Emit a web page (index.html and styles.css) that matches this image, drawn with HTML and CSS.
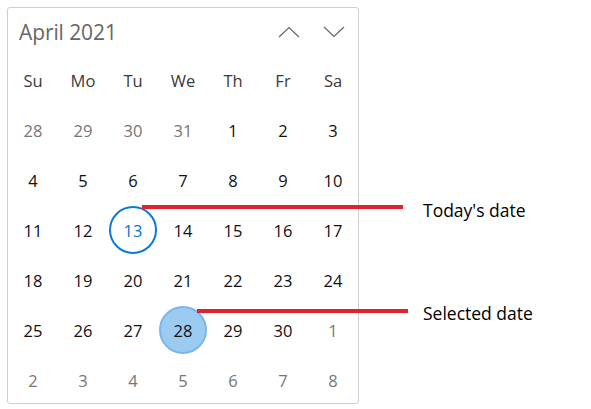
FILE: index.html
```html
<!DOCTYPE html>
<html lang="en">
<head>
<meta charset="utf-8">
<title>Calendar</title>
<link rel="stylesheet" href="styles.css">
</head>
<body>
<div class="page">
  <div class="calendar">
    <div class="cal-header">
      <span class="month">April 2021</span>
      <div class="nav">
        <button class="nav-btn" aria-label="Previous">
          <svg width="22" height="12" viewBox="0 0 22 12"><path d="M1 11 L11 1.5 L21 11" fill="none" stroke="#666" stroke-width="1.2"/></svg>
        </button>
        <button class="nav-btn" aria-label="Next">
          <svg width="22" height="12" viewBox="0 0 22 12"><path d="M1 1 L11 10.5 L21 1" fill="none" stroke="#666" stroke-width="1.2"/></svg>
        </button>
      </div>
    </div>
    <div class="grid">
      <div class="dow">Su</div><div class="dow">Mo</div><div class="dow">Tu</div><div class="dow">We</div><div class="dow">Th</div><div class="dow">Fr</div><div class="dow">Sa</div>

      <div class="day other">28</div><div class="day other">29</div><div class="day other">30</div><div class="day other">31</div><div class="day">1</div><div class="day">2</div><div class="day">3</div>
      <div class="day">4</div><div class="day">5</div><div class="day">6</div><div class="day">7</div><div class="day">8</div><div class="day">9</div><div class="day">10</div>
      <div class="day">11</div><div class="day">12</div><div class="day"><span class="today">13</span></div><div class="day">14</div><div class="day">15</div><div class="day">16</div><div class="day">17</div>
      <div class="day">18</div><div class="day">19</div><div class="day">20</div><div class="day">21</div><div class="day">22</div><div class="day">23</div><div class="day">24</div>
      <div class="day">25</div><div class="day">26</div><div class="day">27</div><div class="day"><span class="selected">28</span></div><div class="day">29</div><div class="day">30</div><div class="day other">1</div>
      <div class="day other">2</div><div class="day other">3</div><div class="day other">4</div><div class="day other">5</div><div class="day other">6</div><div class="day other">7</div><div class="day other">8</div>
    </div>
  </div>

  <div class="callout callout-today"></div>
  <span class="label label-today">Today's date</span>
  <div class="callout callout-selected"></div>
  <span class="label label-selected">Selected date</span>
</div>
</body>
</html>
```

FILE: styles.css
```css
* { box-sizing: border-box; }
html, body { margin: 0; padding: 0; background: #fff; }
body {
  font-family: "Open Sans", "Noto Sans", "Liberation Sans", sans-serif;
  width: 591px;
  height: 409px;
  overflow: hidden;
}
.page {
  position: relative;
  padding: 7px;
  width: 591px;
  height: 409px;
}
.calendar {
  width: 352px;
  height: 397px;
  border: 1px solid #cfcfcf;
  border-radius: 3px;
  overflow: hidden;
  background: #fff;
}
.cal-header {
  height: 47px;
  display: flex;
  align-items: center;
  justify-content: space-between;
  padding: 0 13px 0 11px;
}
.month {
  font-size: 21px;
  color: #666;
  letter-spacing: -0.1px;
}
.nav {
  display: flex;
  gap: 23px;
  align-items: center;
}
.nav-btn {
  border: 0;
  background: none;
  padding: 0;
  width: 22px;
  height: 12px;
  display: flex;
}
.grid {
  display: grid;
  grid-template-columns: repeat(7, 50px);
  grid-auto-rows: 50px;
}
.dow, .day {
  display: flex;
  align-items: center;
  justify-content: center;
  font-size: 16.5px;
}
.dow { color: #3a3a3a; }
.day { color: #111; }
.day.other { color: #767676; }
.today, .selected {
  width: 48px;
  height: 48px;
  border-radius: 50%;
  display: flex;
  align-items: center;
  justify-content: center;
}
.today {
  border: 2px solid #0a7ad6;
  color: #0a74c9;
}
.selected {
  background: #9ccbf1;
  border: 2px solid #79b7ea;
  color: #111;
}
.callout {
  position: absolute;
  height: 4px;
  background: #e3202b;
}
.callout-today { left: 142px; top: 205px; width: 261px; }
.callout-selected { left: 197px; top: 309px; width: 211px; }
.label {
  position: absolute;
  font-size: 17.5px;
  color: #000;
  line-height: 22px;
}
.label-today { left: 423px; top: 199px; }
.label-selected { left: 423px; top: 302px; }
```
